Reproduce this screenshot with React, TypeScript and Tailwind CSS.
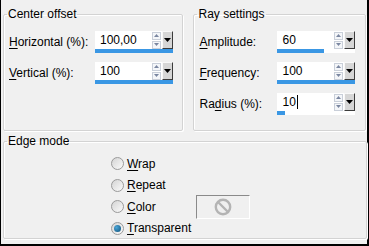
import { FC, ReactNode } from 'react'

type TLabelProps = {
  text: string
  at: number
}

// text with one underlined access-key letter
const Mnemonic: FC<TLabelProps> = ({ text, at }) => (
  <span>
    {text.slice(0, at)}
    <span className="underline underline-offset-2">{text[at]}</span>
    {text.slice(at + 1)}
  </span>
)

type TSpinProps = {
  value: string
  fill: number
  caret?: boolean
}

const SpinInput: FC<TSpinProps> = ({ value, fill, caret = false }) => (
  <div className="flex w-[78px] flex-col">
    <div className="flex h-[18px]">
      <div className="flex flex-1 items-center bg-white pl-[5px] text-[12px] text-black">
        {value}
        {caret && <span className="ml-px h-[14px] w-px bg-black" />}
      </div>
      <div className="flex w-[10px] flex-col justify-center gap-px bg-white pr-px">
        <div className="flex h-[8px] items-center justify-center border border-[#c9cfd9] bg-[#f4f6f9]">
          <svg width="5" height="3" viewBox="0 0 5 3">
            <path d="M0 3 L2.5 0 L5 3 Z" fill="#7a86a0" />
          </svg>
        </div>
        <div className="flex h-[8px] items-center justify-center border border-[#c9cfd9] bg-[#f4f6f9]">
          <svg width="5" height="3" viewBox="0 0 5 3">
            <path d="M0 0 L2.5 3 L5 0 Z" fill="#7a86a0" />
          </svg>
        </div>
      </div>
      <div className="flex w-[11px] items-center justify-center border-t border-l border-[#f8f8f8] border-r-[#3c3c3c] border-b-[#3c3c3c] border-r border-b bg-[#d6d6d6]">
        <svg width="7" height="4" viewBox="0 0 7 4">
          <path d="M0 0 L3.5 4 L7 0 Z" fill="#000" />
        </svg>
      </div>
    </div>
    <div className="h-[4px] bg-white">
      <div className="h-full bg-[#3a97e4]" style={{ width: `${fill * 100}%` }} />
    </div>
  </div>
)

type TRowProps = {
  label: ReactNode
  labelWidth: string
  children: ReactNode
}

const FieldRow: FC<TRowProps> = ({ label, labelWidth, children }) => (
  <div className="flex h-[22px] items-center">
    <div className={`${labelWidth} text-[12px] text-black`}>{label}</div>
    {children}
  </div>
)

type TGroupProps = {
  title: string
  className?: string
  children: ReactNode
}

const Group: FC<TGroupProps> = ({ title, className = '', children }) => (
  <fieldset
    className={`m-0 rounded-[2px] border border-[#d3d3d3] p-0 shadow-[inset_1px_1px_0_#ffffff,1px_1px_0_#ffffff] ${className}`}
  >
    <legend className="ml-[3px] px-[1px] text-[12px] leading-[14px] text-black">
      {title}
    </legend>
    {children}
  </fieldset>
)

const Radio: FC<{ checked?: boolean; label: string; at: number; children?: ReactNode }> = ({
  checked = false,
  label,
  at,
  children,
}) => (
  <div className="flex h-[21.5px] items-center">
    <span className="flex h-[13px] w-[13px] items-center justify-center rounded-full border border-[#9a9a9a] bg-gradient-to-br from-[#d4d4d4] to-[#fbfbfb]">
      {checked && (
        <span className="h-[7px] w-[7px] rounded-full bg-[radial-gradient(circle_at_35%_35%,#4aa6d8,#0e4f78)]" />
      )}
    </span>
    <span className="ml-[3px] w-[69px] text-[12px] text-black">
      <Mnemonic text={label} at={at} />
    </span>
    {children}
  </div>
)

const App: FC = () => {
  return (
    <div className="flex h-[246px] w-[369px] flex-col border-l border-r-2 border-b-2 border-black bg-[#f0f0f0] pt-[7px] pl-[2px] pr-[1px] font-['Liberation_Sans',Arial,sans-serif]">
      <div className="flex gap-[10px]">
        <Group title="Center offset" className="h-[124px] w-[181px]">
          <div className="flex flex-col gap-[9px] pt-[10px] pl-[5px]">
            <FieldRow label={<Mnemonic text="Horizontal (%):" at={0} />} labelWidth="w-[86px]">
              <SpinInput value="100,00" fill={1} />
            </FieldRow>
            <FieldRow label={<Mnemonic text="Vertical (%):" at={0} />} labelWidth="w-[86px]">
              <SpinInput value="100" fill={1} />
            </FieldRow>
          </div>
        </Group>
        <Group title="Ray settings" className="h-[124px] w-[173px]">
          <div className="flex flex-col gap-[9px] pt-[10px] pl-[5px]">
            <FieldRow label={<Mnemonic text="Amplitude:" at={0} />} labelWidth="w-[78px]">
              <SpinInput value="60" fill={0.6} />
            </FieldRow>
            <FieldRow label={<Mnemonic text="Frequency:" at={0} />} labelWidth="w-[78px]">
              <SpinInput value="100" fill={1} />
            </FieldRow>
            <FieldRow label={<Mnemonic text="Radius (%):" at={2} />} labelWidth="w-[78px]">
              <SpinInput value="10" fill={0.1} caret />
            </FieldRow>
          </div>
        </Group>
      </div>
      <Group title="Edge mode" className="mt-[3px] h-[105px] w-[364px]">
        <div className="flex flex-col pt-[5px] pl-[107px]">
          <Radio label="Wrap" at={0} />
          <Radio label="Repeat" at={0} />
          <Radio label="Color" at={0}>
            <div className="flex h-[24px] w-[54px] items-center justify-center border-t border-l border-[#8a8a8a] border-r-white border-b-white border-r border-b bg-[#f0f0f0]">
              <svg width="18" height="18" viewBox="0 0 18 18">
                <circle cx="9" cy="9" r="7.2" fill="none" stroke="#b4b4b4" strokeWidth="2.4" />
                <path d="M4 4 L14 14" stroke="#b4b4b4" strokeWidth="2.4" />
              </svg>
            </div>
          </Radio>
          <Radio label="Transparent" at={0} checked />
        </div>
      </Group>
    </div>
  )
}

export default App
